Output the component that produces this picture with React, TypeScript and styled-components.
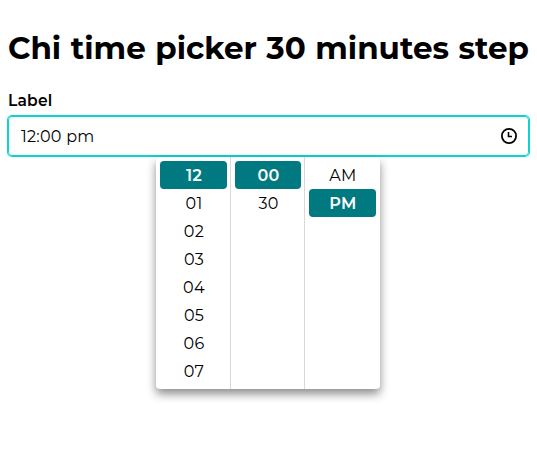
import React from "react";
import styled, { createGlobalStyle } from "styled-components";

const GlobalStyle = createGlobalStyle`
  * { box-sizing: border-box; }
  body {
    margin: 0;
    background: #fff;
    color: #000;
    font-family: Montserrat, Inter, "Open Sans", sans-serif;
    font-size: 16px;
    line-height: 24px;
  }
`;

const Page = styled.main`
  padding: 28px 8px 0;
  overflow: hidden;
  height: 456px;
`;

const Title = styled.h1`
  margin: 0;
  font-size: 31px;
  line-height: 41px;
  font-weight: 700;
  letter-spacing: 0;
  word-spacing: 0.8px;
  white-space: nowrap;
`;

const Label = styled.label`
  display: block;
  margin-top: 20px;
  height: 27px;
  font-size: 15.5px;
  font-weight: 600;
  letter-spacing: 0.2px;
`;

const Field = styled.div`
  display: flex;
  align-items: center;
  justify-content: space-between;
  width: 521px;
  height: 40px;
  padding: 0 10px 0 12px;
  border: 1px solid #0bd3d3;
  border-radius: 4px;
  box-shadow: 0 0 0 1px #0bd3d3;
`;

const Value = styled.span`
  padding-top: 2px;
  font-size: 16px;
  letter-spacing: 0.25px;
`;

const Dropdown = styled.div`
  position: relative;
  display: grid;
  grid-template-columns: 75px 74px 75px;
  width: 224px;
  height: 232px;
  margin: 1px 0 0 148px;
  background: #fff;
  border-radius: 4px;
  box-shadow: 0 5px 10px rgba(0, 0, 0, 0.45);
`;

const Column = styled.div`
  padding: 4px 3px 0 4px;
  border-right: 1px solid #d8d8d8;

  &:last-child {
    padding-right: 4px;
    border-right: 0;
  }
`;

const Option = styled.div<{ $active?: boolean }>`
  height: 28px;
  padding: 1px 0 0 1px;
  border-radius: 4px;
  font-size: 16px;
  line-height: 28px;
  letter-spacing: 0.3px;
  text-align: center;
  color: ${(p) => (p.$active ? "#fff" : "#000")};
  background: ${(p) => (p.$active ? "#007a80" : "transparent")};
  font-weight: ${(p) => (p.$active ? 600 : 400)};
`;

const columns = [
  { options: ["12", "01", "02", "03", "04", "05", "06", "07"], active: "12" },
  { options: ["00", "30"], active: "00" },
  { options: ["AM", "PM"], active: "PM" },
];

const ClockIcon = () => (
  <svg width="18" height="18" viewBox="0 0 18 18" fill="none" stroke="#000" strokeWidth="1.8">
    <circle cx="9" cy="9" r="7.1" />
    <path d="M8.5 5v4.5H12" strokeWidth="1.6" />
  </svg>
);

export default function App() {
  return (
    <Page>
      <GlobalStyle />
      <Title>Chi time picker 30 minutes step</Title>
      <Label>Label</Label>
      <Field>
        <Value>12:00 pm</Value>
        <ClockIcon />
      </Field>
      <Dropdown>
        {columns.map((column) => (
          <Column key={column.active}>
            {column.options.map((option) => (
              <Option key={option} $active={option === column.active}>
                {option}
              </Option>
            ))}
          </Column>
        ))}
      </Dropdown>
    </Page>
  );
}
